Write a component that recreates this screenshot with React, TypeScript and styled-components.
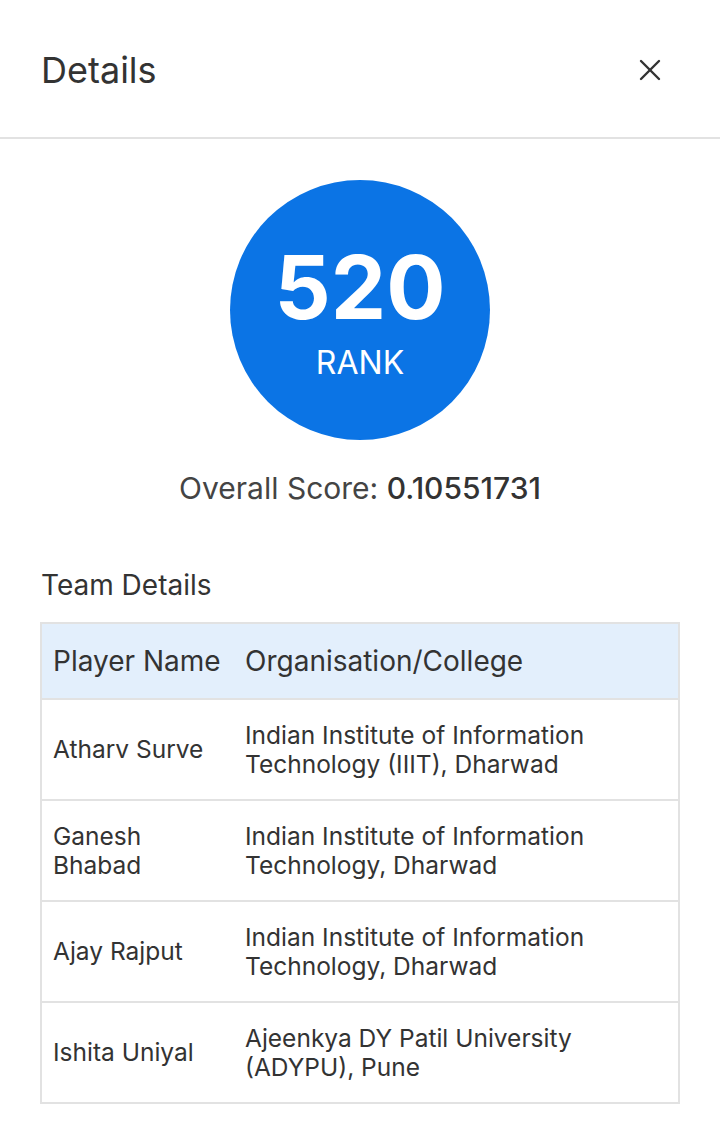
import styled, { createGlobalStyle } from "styled-components";

const Global = createGlobalStyle`
  body {
    margin: 0;
    background: #ffffff;
    font-family: Inter, "Noto Sans", sans-serif;
    color: #333333;
  }
`;

const Page = styled.div`
  width: 720px;
  min-height: 1140px;
  background: #ffffff;
`;

const Header = styled.header`
  height: 139px;
  box-sizing: border-box;
  padding: 2px 58px 0 41px;
  display: flex;
  align-items: center;
  justify-content: space-between;
  border-bottom: 2px solid #e2e2e2;
`;

const Title = styled.h1`
  margin: 0;
  font-size: 36px;
  font-weight: 400;
  color: #333333;
`;

const CloseButton = styled.button`
  border: none;
  background: none;
  padding: 0;
  width: 24px;
  height: 24px;
  display: flex;
  align-items: center;
  justify-content: center;
  color: #333333;
  cursor: pointer;
`;

const Body = styled.main`
  padding: 41px 40px 0;
  display: flex;
  flex-direction: column;
`;

const RankCircle = styled.div`
  align-self: center;
  width: 260px;
  height: 260px;
  border-radius: 50%;
  background: #0b74e5;
  color: #ffffff;
  display: flex;
  flex-direction: column;
  align-items: center;
  justify-content: center;
`;

const RankNumber = styled.div`
  font-size: 88px;
  font-weight: 700;
  line-height: 1;
  margin-top: 4px;
`;

const RankLabel = styled.div`
  font-size: 32px;
  font-weight: 400;
  margin-top: 12px;
`;

const Score = styled.p`
  margin: 30px 0 0;
  text-align: center;
  font-size: 30px;
  color: #444444;
  span {
    font-weight: 500;
    color: #333333;
  }
`;

const SectionTitle = styled.h2`
  margin: 62px 0 0 1px;
  font-size: 28px;
  font-weight: 400;
  color: #333333;
`;

const Table = styled.table`
  margin-top: 20px;
  width: 640px;
  border-collapse: collapse;
  border: 2px solid #e2e2e2;
`;

const HeadCell = styled.th`
  height: 74px;
  background: #e3effc;
  text-align: left;
  font-size: 28px;
  font-weight: 400;
  color: #333333;
  padding: 0 12px 0 11px;
  border-bottom: 2px solid #e2e2e2;
  white-space: nowrap;
  &:first-child {
    width: 169px;
  }
`;

const Cell = styled.td`
  height: 99px;
  padding: 0 12px 0 11px;
  font-size: 24.5px;
  line-height: 29px;
  color: #333333;
  vertical-align: middle;
`;

const Row = styled.tr`
  border-bottom: 2px solid #e2e2e2;
`;

const team = [
  { name: "Atharv Surve", org: "Indian Institute of Information Technology (IIIT), Dharwad" },
  { name: "Ganesh Bhabad", org: "Indian Institute of Information Technology, Dharwad" },
  { name: "Ajay Rajput", org: "Indian Institute of Information Technology, Dharwad" },
  { name: "Ishita Uniyal", org: "Ajeenkya DY Patil University (ADYPU), Pune" },
];

const App = () => {
  return (
    <Page>
      <Global />
      <Header>
        <Title>Details</Title>
        <CloseButton aria-label="Close">
          <svg width="22" height="22" viewBox="0 0 22 22" fill="none" stroke="currentColor" strokeWidth="2.4" strokeLinecap="round">
            <line x1="2" y1="2" x2="20" y2="20" />
            <line x1="20" y1="2" x2="2" y2="20" />
          </svg>
        </CloseButton>
      </Header>
      <Body>
        <RankCircle>
          <RankNumber>520</RankNumber>
          <RankLabel>RANK</RankLabel>
        </RankCircle>
        <Score>
          Overall Score: <span>0.10551731</span>
        </Score>
        <SectionTitle>Team Details</SectionTitle>
        <Table>
          <thead>
            <tr>
              <HeadCell>Player Name</HeadCell>
              <HeadCell>Organisation/College</HeadCell>
            </tr>
          </thead>
          <tbody>
            {team.map((m) => (
              <Row key={m.name}>
                <Cell>{m.name}</Cell>
                <Cell>{m.org}</Cell>
              </Row>
            ))}
          </tbody>
        </Table>
      </Body>
    </Page>
  );
};

export default App;
